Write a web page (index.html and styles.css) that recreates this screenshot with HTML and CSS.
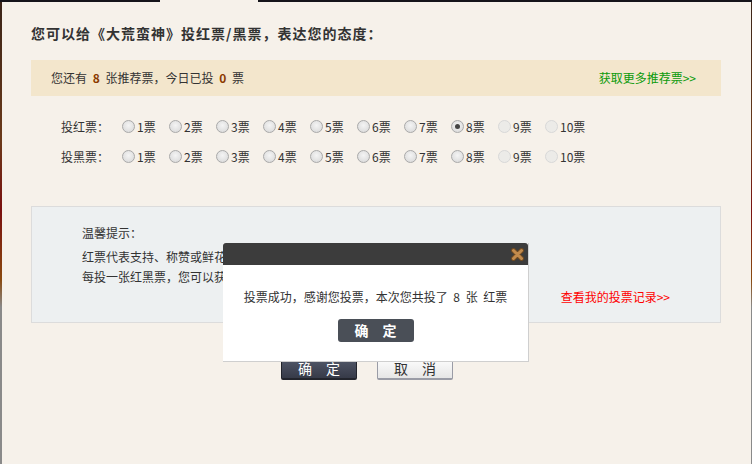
FILE: index.html
```html
<!DOCTYPE html>
<html>
  <head>
    <title>投票</title>
    <meta charset='utf-8'>
    <link rel="stylesheet" href="styles.css">
  </head>
  <body>
    <div class="topbar"><span class="dark w1"></span><span class="tab"></span><span class="dark grow"></span></div>
    <div class="frame">
      <h2 class="title">您可以给《大荒蛮神》投红票/黑票，表达您的态度：</h2>

      <div class="info">
        <span>您还有 <b>8</b> 张推荐票，今日已投 <b>0</b> 票</span>
        <a class="more">获取更多推荐票&gt;&gt;</a>
      </div>

      <!-- 红票 -->
      <div class="row">
        <span class="label">投红票：</span>
        <span class="opt"><i class="radio"></i>1票</span>
        <span class="opt"><i class="radio"></i>2票</span>
        <span class="opt"><i class="radio"></i>3票</span>
        <span class="opt"><i class="radio"></i>4票</span>
        <span class="opt"><i class="radio"></i>5票</span>
        <span class="opt"><i class="radio"></i>6票</span>
        <span class="opt"><i class="radio"></i>7票</span>
        <span class="opt"><i class="radio on"></i>8票</span>
        <span class="opt"><i class="radio off"></i>9票</span>
        <span class="opt"><i class="radio off"></i>10票</span>
      </div>
      <!-- 黑票 -->
      <div class="row">
        <span class="label">投黑票：</span>
        <span class="opt"><i class="radio"></i>1票</span>
        <span class="opt"><i class="radio"></i>2票</span>
        <span class="opt"><i class="radio"></i>3票</span>
        <span class="opt"><i class="radio"></i>4票</span>
        <span class="opt"><i class="radio"></i>5票</span>
        <span class="opt"><i class="radio"></i>6票</span>
        <span class="opt"><i class="radio"></i>7票</span>
        <span class="opt"><i class="radio"></i>8票</span>
        <span class="opt"><i class="radio off"></i>9票</span>
        <span class="opt"><i class="radio off"></i>10票</span>
      </div>

      <div class="tips">
        <p class="tips-head">温馨提示：</p>
        <p>红票代表支持、称赞或鲜花，黑票代表反对、批评或鸡蛋。</p>
        <p>每投一张红黑票，您可以获得相应的经验值奖励。</p>
        <p class="record"><a>查看我的投票记录</a>&gt;&gt;</p>
      </div>

      <div class="actions">
        <a class="btn btn-ok">确　定</a>
        <a class="btn btn-cancel">取　消</a>
      </div>
    </div>

    <!-- 弹出的提示框 盖在页面上 -->
    <div class="dialog">
      <div class="dialog-head">
        <svg class="close" width="13" height="13" viewBox="0 0 13 13">
          <path d="M2.5 2.5 L10.5 10.5 M10.5 2.5 L2.5 10.5" stroke="#6e4a22" stroke-width="5" stroke-linecap="round"/>
          <path d="M2.5 2.5 L10.5 10.5 M10.5 2.5 L2.5 10.5" stroke="#c28a4c" stroke-width="3" stroke-linecap="round"/>
        </svg>
      </div>
      <div class="dialog-body">
        <p>投票成功，感谢您投票，本次您共投了 8 张 红票</p>
        <a class="dialog-btn">确　定</a>
      </div>
    </div>
  </body>
</html>
```

FILE: styles.css
```css
body {
  margin: 0;
  background: #f6f1ea;
  font-family: "Noto Sans CJK SC", "Liberation Sans", sans-serif;
  font-size: 12px;
  color: #333;
  height: 464px;
  overflow: hidden;
}
p { margin: 0; }
a { cursor: pointer; }

.topbar {
  display: flex;
  height: 2px;
}
.topbar .dark { background: #15141a; }
.topbar .w1 { width: 160px; }
.topbar .tab { width: 98px; background: #f6f1ea; }
.topbar .grow { flex: 1; }

.frame {
  height: 462px;
  padding: 0 30px 0 29px;
  border-left: 2px solid #888;
  border-image: linear-gradient(#3a2418, #6b3a1a 30%, #7a1010 45%, #8a4a10 60%, #8a8a8a 66%, #8a8a8a) 1;
  border-right: 1px solid #8a8a8a;
  border-top: 0;
  border-bottom: 0;
  box-sizing: border-box;
}

.title {
  margin: 0;
  padding-top: 21px;
  font-size: 14px;
  line-height: 20px;
  font-weight: bold;
  letter-spacing: 1px;
  color: #333;
}

.info {
  margin-top: 17px;
  height: 36px;
  line-height: 36px;
  padding: 0 25px 0 20px;
  background: #f3e6cc;
  display: flex;
  justify-content: space-between;
}
.info b { color: #8b3a00; padding: 0 3px; }
.info .more { color: #0a9a0a; }

.row {
  display: flex;
  align-items: center;
  height: 30px;
  padding-left: 30px;
}
.info + .row { margin-top: 15px; }
.label { width: 61px; }
.opt {
  display: flex;
  align-items: center;
  width: 47px;
}
.radio {
  width: 11px;
  height: 11px;
  border: 1px solid #a9a9a9;
  border-radius: 50%;
  margin-right: 2px;
  background: radial-gradient(circle at 50% 40%, #f4f4f4, #d6d6d6);
  box-sizing: content-box;
  position: relative;
}
.radio.on::after {
  content: "";
  position: absolute;
  left: 3px;
  top: 3px;
  width: 5px;
  height: 5px;
  border-radius: 50%;
  background: #444;
}
.radio.off {
  border-color: #d8d8d8;
  background: #ecebe8;
}

.tips {
  margin-top: 35px;
  height: 117px;
  box-sizing: border-box;
  background: #edf0f1;
  border: 1px solid #dcdcdc;
  padding: 16px 50px 0 50px;
  line-height: 20px;
}
.tips-head { margin-bottom: 4px; }
.record {
  text-align: right;
  color: #f00;
}
.record a { color: #f00; }

.actions {
  display: flex;
  gap: 20px;
  margin-top: 33px;
  padding-left: 250px;
}
.btn {
  width: 76px;
  height: 24px;
  line-height: 22px;
  text-align: center;
  font-size: 14px;
  box-sizing: border-box;
  border-radius: 2px;
}
.btn-ok {
  color: #fff;
  background: linear-gradient(#555b6c, #363a48);
  border: 1px solid #22242c;
  border-bottom-width: 2px;
}
.btn-cancel {
  color: #333;
  background: linear-gradient(#fff, #e6e6e6);
  border: 1px solid #9a9ca6;
  border-bottom-width: 2px;
}

.dialog {
  position: absolute;
  left: 223px;
  top: 243px;
  width: 306px;
  height: 119px;
  background: #fff;
  border-right: 1px solid #cfcfcf;
  border-bottom: 1px solid #cfcfcf;
  box-sizing: border-box;
}
.dialog-head {
  height: 22px;
  background: #3c3c3c;
  border-radius: 3px 3px 0 0;
  display: flex;
  justify-content: flex-end;
  align-items: center;
  padding-right: 4px;
}
.dialog-body {
  display: flex;
  flex-direction: column;
  align-items: center;
}
.dialog-body p {
  margin-top: 23px;
  line-height: 18px;
  word-spacing: 3px;
}
.dialog-btn {
  margin-top: 13px;
  width: 76px;
  height: 23px;
  line-height: 23px;
  text-align: center;
  background: #4a4f57;
  color: #fff;
  font-size: 14px;
  font-weight: bold;
  border-radius: 3px;
}
```
